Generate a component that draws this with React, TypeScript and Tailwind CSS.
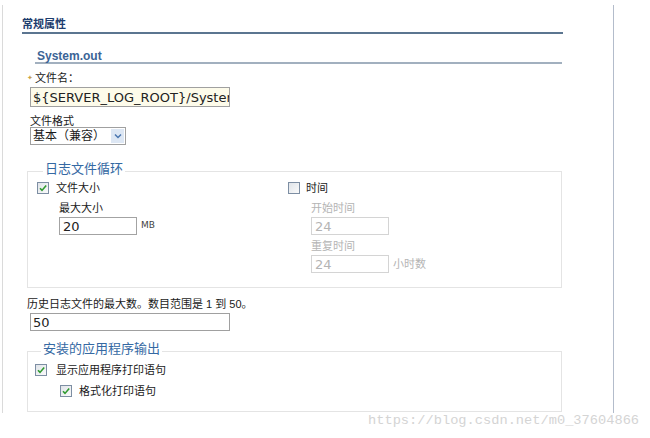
import type { ReactNode } from "react";

function CheckBox({ checked }: { checked: boolean }) {
  return (
    <svg className="shrink-0" width="12" height="12" viewBox="0 0 12 12">
      <defs>
        <linearGradient id="cbg" x1="0" y1="0" x2="1" y2="1">
          <stop offset="0" stopColor="#dfe3e8" />
          <stop offset="1" stopColor="#fbfbfb" />
        </linearGradient>
      </defs>
      <rect x="0.5" y="0.5" width="11" height="11" fill="url(#cbg)" stroke="#7d8ea3" />
      {checked ? (
        <path d="M3 6.2 L5 8.4 L9.2 3.4" fill="none" stroke="#2f9a2f" strokeWidth="1.6" />
      ) : null}
    </svg>
  );
}

function Legend({ children }: { children: ReactNode }) {
  return (
    <legend className="relative top-[-2px] ml-[6px] px-[2px] text-[13px] leading-[16px] text-[#3569a3]">
      {children}
    </legend>
  );
}

function SmallInput({ value, muted }: { value: string; muted?: boolean }) {
  return (
    <input
      className={`block h-[18px] w-[78px] border pl-[3px] font-['DejaVu_Sans',sans-serif] text-[13px] leading-[16px] outline-none ${
        muted ? "border-[#d4d4d4] text-[#b4b4b4]" : "border-[#a3a3a3] text-[#222]"
      }`}
      readOnly
      value={value}
    />
  );
}

export default function App() {
  return (
    <div className="relative h-[438px] w-[650px] overflow-hidden bg-white font-['Liberation_Sans','Noto_Sans_CJK_SC',sans-serif] text-[#1a1a1a]">
      <div className="pl-[2px] pt-[5px]">
        <div className="h-[408px] w-[612px] border-l border-r border-l-[#dadada] border-r-[#b3bccb] pl-[19px] pt-[12px]">
          <div className="w-[541px] border-b-2 border-[#5b7590] pb-[1px] text-[11px] font-bold leading-[14px] text-[#1e3d6e]">
            常规属性
          </div>

          <div className="ml-[13px] mt-[16px] w-[527px] border-b-2 border-[#a2b0bf] pl-[2px] text-[12px] font-bold leading-[12px] text-[#3b6496]">
            System.out
          </div>

          <div className="ml-[5px]">
            <div className="mt-[7px] flex items-center text-[11px] leading-[14px]">
              <span className="mr-[2px] text-[7px] text-[#c9a24a]">✦</span>
              文件名：
            </div>
            <input
              className="ml-[3px] mt-[2px] block h-[20px] w-[200px] border border-[#a0a0a0] bg-[#fdfbea] pl-[2px] font-['DejaVu_Sans',sans-serif] text-[13px] leading-[18px] text-[#222] outline-none"
              readOnly
              value="${SERVER_LOG_ROOT}/SystemOut.log"
            />

            <div className="ml-[3px] mt-[8px] text-[11px] leading-[12px]">文件格式</div>
            <div className="ml-[3px] flex h-[18px] w-[96px] items-center border border-[#a0a0a0] bg-white">
              <span className="flex-1 pl-[2px] text-[12px] leading-[16px]">基本（兼容）</span>
              <span className="mr-[1px] flex h-[14px] w-[13px] items-center justify-center bg-[#dde7f4]">
                <svg width="8" height="6" viewBox="0 0 8 6">
                  <path d="M1 1.5 L4 4.5 L7 1.5" fill="none" stroke="#4a76b0" strokeWidth="1.5" />
                </svg>
              </span>
            </div>

            <fieldset className="mt-[18px] w-[535px] border border-[#e4e4e4] pb-[14px] pl-[9px] pt-[2px]">
              <Legend>日志文件循环</Legend>
              <div className="flex">
                <div className="w-[251px]">
                  <div className="flex items-center gap-[7px] text-[11px] leading-[14px]">
                    <CheckBox checked />
                    文件大小
                  </div>
                  <div className="pl-[22px]">
                    <div className="mt-[6px] text-[11px] leading-[14px]">最大大小</div>
                    <div className="mt-[2px] flex items-center">
                      <SmallInput value="20" />
                      <span className="ml-[4px] font-['DejaVu_Sans',sans-serif] text-[9px] text-[#444]">MB</span>
                    </div>
                  </div>
                </div>
                <div>
                  <div className="flex items-center gap-[6px] text-[11px] leading-[14px]">
                    <CheckBox checked={false} />
                    时间
                  </div>
                  <div className="pl-[23px] text-[#b4b4b4]">
                    <div className="mt-[6px] text-[11px] leading-[14px]">开始时间</div>
                    <div className="mt-[2px]">
                      <SmallInput value="24" muted />
                    </div>
                    <div className="mt-[4px] text-[11px] leading-[14px]">重复时间</div>
                    <div className="mt-[2px] flex items-center">
                      <SmallInput value="24" muted />
                      <span className="ml-[4px] text-[11px]">小时数</span>
                    </div>
                  </div>
                </div>
              </div>
            </fieldset>

            <div className="mt-[9px] text-[11px] leading-[14px]">历史日志文件的最大数。数目范围是 1 到 50。</div>
            <input
              className="ml-[3px] mt-[2px] block h-[18px] w-[200px] border border-[#a0a0a0] pl-[2px] font-['DejaVu_Sans',sans-serif] text-[13px] leading-[16px] text-[#222] outline-none"
              readOnly
              value="50"
            />

            <fieldset className="mt-[12px] w-[535px] border border-[#e4e4e4] pb-[13px] pl-[7px] pt-[4px]">
              <Legend>安装的应用程序输出</Legend>
              <div className="flex items-center gap-[9px] text-[11px] leading-[14px]">
                <CheckBox checked />
                显示应用程序打印语句
              </div>
              <div className="ml-[25px] mt-[7px] flex items-center gap-[7px] text-[11px] leading-[14px]">
                <CheckBox checked />
                格式化打印语句
              </div>
            </fieldset>
          </div>
        </div>
      </div>

      <div className="absolute left-[368px] top-[412px] font-['Liberation_Mono',monospace] text-[13.7px] leading-[18px] text-[#d4d4d4]">
        https://blog.csdn.net/m0_37604866
      </div>
    </div>
  );
}
